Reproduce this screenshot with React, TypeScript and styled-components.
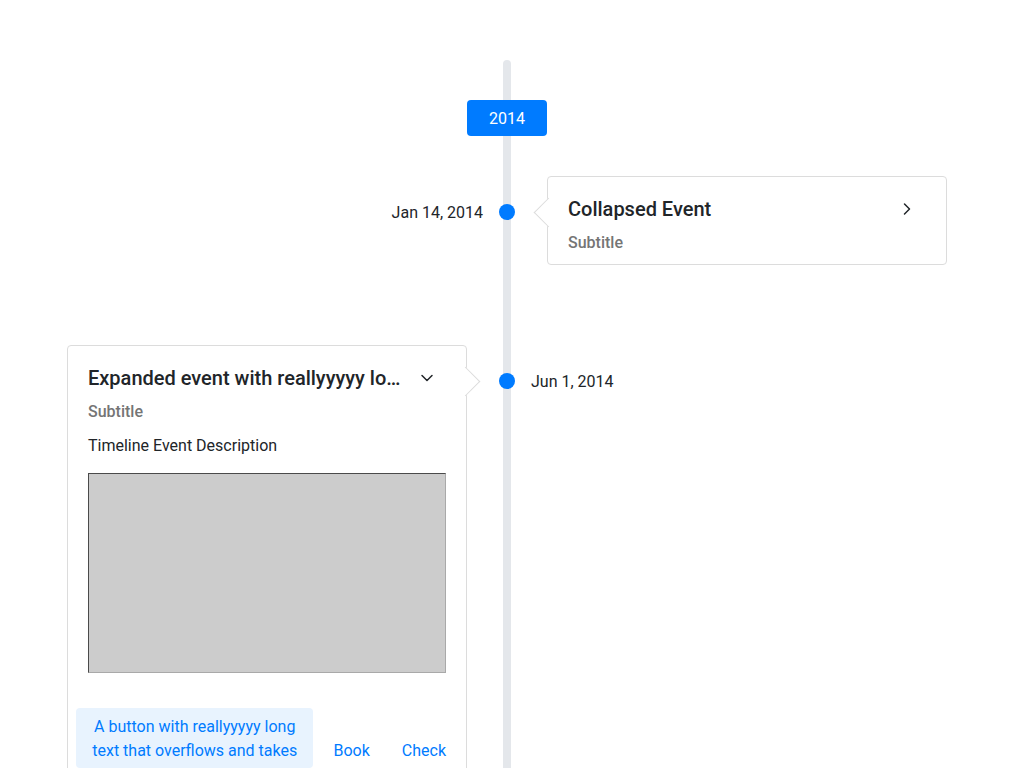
import React from "react";
import styled, { createGlobalStyle } from "styled-components";
import { ChevronRight, ChevronDown } from "lucide-react";

const GlobalStyle = createGlobalStyle`
  html, body {
    margin: 0;
    padding: 0;
    background: #fff;
    overflow: hidden;
  }
  body {
    font-family: Roboto, "Liberation Sans", Arial, sans-serif;
    color: #212529;
  }
  * {
    box-sizing: border-box;
  }
`;

const Page = styled.div`
  width: 1014px;
  padding-top: 60px;
`;

const Timeline = styled.div`
  position: relative;
  padding-top: 40px;
  display: flex;
  flex-direction: column;

  &::before {
    content: "";
    position: absolute;
    top: 0;
    bottom: 0;
    left: 50%;
    width: 8px;
    margin-left: -4px;
    border-radius: 4px;
    background: #e4e7eb;
  }
`;

const YearRow = styled.div`
  position: relative;
  display: flex;
  justify-content: center;
  margin-bottom: 40px;
`;

const YearBadge = styled.div`
  width: 80px;
  height: 36px;
  padding-top: 2px;
  line-height: 34px;
  text-align: center;
  border-radius: 4px;
  background: #007bff;
  color: #fff;
  font-size: 16px;
`;

const EventRow = styled.div`
  position: relative;
  display: grid;
  grid-template-columns: 1fr 48px 1fr;
  align-items: start;
  margin-bottom: 80px;
`;

const Side = styled.div<{ $align: "left" | "right" }>`
  display: flex;
  justify-content: ${(p) => (p.$align === "right" ? "flex-end" : "flex-start")};
`;

const DateLabel = styled.div`
  margin-top: 25px;
  font-size: 16px;
  line-height: 24px;
  color: #212529;
`;

const DotCell = styled.div`
  display: flex;
  justify-content: center;
`;

const Dot = styled.div`
  margin-top: 28px;
  width: 16px;
  height: 16px;
  border-radius: 50%;
  background: #007bff;
`;

const Card = styled.div<{ $side: "left" | "right" }>`
  position: relative;
  width: 400px;
  ${(p) => (p.$side === "left" ? "margin-right: 16px;" : "margin-left: 16px;")}
  background: #fff;
  border: 1px solid #dcdcdc;
  border-radius: 4px;

  &::before {
    content: "";
    position: absolute;
    top: 25px;
    width: 20px;
    height: 20px;
    background: #fff;
    transform: rotate(45deg);
    ${(p) =>
      p.$side === "left"
        ? `right: -10px; border-top: 1px solid #dcdcdc; border-right: 1px solid #dcdcdc;`
        : `left: -10px; border-left: 1px solid #dcdcdc; border-bottom: 1px solid #dcdcdc;`}
  }
`;

const CardBody = styled.div<{ $bottom: number }>`
  padding: 20px 20px ${(p) => p.$bottom}px;
`;

const Header = styled.div`
  display: flex;
  align-items: center;
`;

const Title = styled.div`
  flex: 1;
  min-width: 0;
  font-size: 20px;
  font-weight: 500;
  line-height: 24px;
  white-space: nowrap;
  overflow: hidden;
  text-overflow: ellipsis;
  color: #212529;
`;

const ToggleButton = styled.button`
  flex: none;
  width: 40px;
  height: 24px;
  margin-right: -1px;
  padding: 0;
  border: none;
  background: none;
  display: flex;
  align-items: center;
  justify-content: center;
  color: #212529;
  cursor: pointer;
`;

const Subtitle = styled.div`
  margin-top: 10px;
  font-size: 16px;
  font-weight: 500;
  line-height: 24px;
  color: #757575;
`;

const Description = styled.div`
  margin-top: 10px;
  font-size: 16px;
  line-height: 24px;
  color: #212529;
`;

const Media = styled.div`
  margin-top: 15px;
  height: 200px;
  background: #cccccc;
  border: 1px solid;
  border-color: #4a4a4a #a9a9a9 #a9a9a9 #4a4a4a;
`;

const Actions = styled.div`
  display: flex;
  align-items: flex-end;
  gap: 8px;
  padding: 8px;
`;

const ActionButton = styled.button<{ $filled?: boolean }>`
  flex: ${(p) => (p.$filled ? "0 1 auto" : "none")};
  white-space: ${(p) => (p.$filled ? "normal" : "nowrap")};
  padding: 7px 12px 5px;
  border: none;
  border-radius: 4px;
  background: ${(p) => (p.$filled ? "#e8f3fe" : "transparent")};
  color: #007bff;
  font-family: inherit;
  font-size: 16px;
  line-height: 24px;
  text-align: center;
  cursor: pointer;
`;

export default function App() {
  return (
    <Page>
      <GlobalStyle />
      <Timeline>
        <YearRow>
          <YearBadge>2014</YearBadge>
        </YearRow>

        <EventRow>
          <Side $align="right">
            <DateLabel>Jan 14, 2014</DateLabel>
          </Side>
          <DotCell>
            <Dot />
          </DotCell>
          <Side $align="left">
            <Card $side="right">
              <CardBody $bottom={9}>
                <Header>
                  <Title>Collapsed Event</Title>
                  <ToggleButton aria-label="Expand">
                    <ChevronRight size={20} strokeWidth={1.8} />
                  </ToggleButton>
                </Header>
                <Subtitle>Subtitle</Subtitle>
              </CardBody>
            </Card>
          </Side>
        </EventRow>

        <EventRow>
          <Side $align="right">
            <Card $side="left">
              <CardBody $bottom={27}>
                <Header>
                  <Title>Expanded event with reallyyyyy long title that overflows</Title>
                  <ToggleButton aria-label="Collapse">
                    <ChevronDown size={20} strokeWidth={1.8} />
                  </ToggleButton>
                </Header>
                <Subtitle>Subtitle</Subtitle>
                <Description>Timeline Event Description</Description>
                <Media />
              </CardBody>
              <Actions>
                <ActionButton $filled>
                  A button with reallyyyyy long text that overflows and takes
                </ActionButton>
                <ActionButton>Book</ActionButton>
                <ActionButton>Check</ActionButton>
              </Actions>
            </Card>
          </Side>
          <DotCell>
            <Dot />
          </DotCell>
          <Side $align="left">
            <DateLabel>Jun 1, 2014</DateLabel>
          </Side>
        </EventRow>
      </Timeline>
    </Page>
  );
}
